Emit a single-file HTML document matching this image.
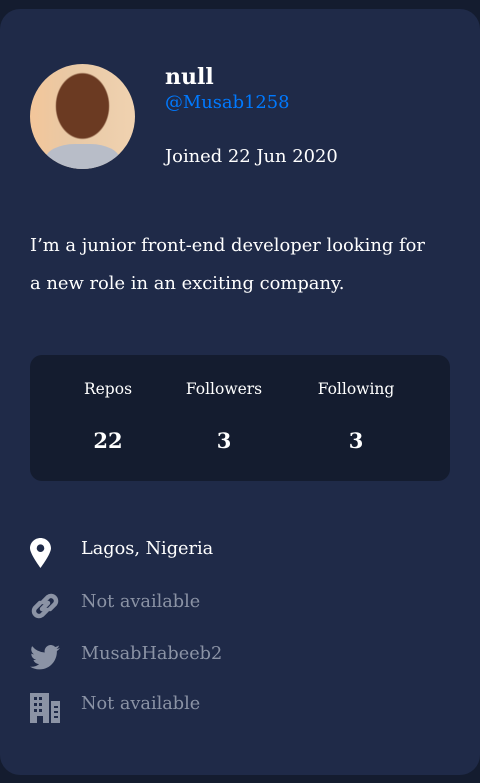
<!DOCTYPE html>
<html><head><style>
*{margin:0;padding:0;box-sizing:border-box}
body{width:480px;height:783px;background:#141c2f;font-family:"DejaVu Serif","Liberation Serif",serif;color:#fff;position:relative;overflow:hidden}
.card{position:absolute;left:0;top:9px;width:480px;height:766px;background:#1f2a48;border-radius:20px}
.a{position:absolute;white-space:nowrap}
.av{left:30px;top:64px;width:105px;height:105px;border-radius:50%;background:radial-gradient(ellipse 26% 32% at 50% 40%,#6b3a22 0 95%,transparent 100%),linear-gradient(90deg,#f3c69a,#e8c9a6 40%,#f0d2b0);overflow:hidden}
.shirt{position:absolute;left:15px;top:80px;width:75px;height:40px;background:#b8bdc8;border-radius:40% 40% 0 0}
.stats{left:30px;top:355px;width:420px;height:126px;background:#141c2f;border-radius:12px}
.lab{font-size:15.5px;top:380px;transform:translateX(-50%)}
.val{font-size:21px;font-weight:bold;top:428px;transform:translateX(-50%)}
.it{left:81px;font-size:17.7px}
.g{color:#8b93a5}
</style></head><body>
<div class="card"></div>
<div class="a av"><div class="shirt"></div></div>
<div class="a" style="left:165px;top:64px;font-size:22px;font-weight:bold">null</div>
<div class="a" style="left:165px;top:92px;font-size:17.9px;color:#0079ff">@Musab1258</div>
<div class="a" style="left:165px;top:146px;font-size:17.9px">Joined 22 Jun 2020</div>
<div class="a" style="left:30px;top:227px;font-size:17.9px;line-height:38px;width:400px;white-space:normal">I’m a junior front-end developer looking for a new role in an exciting company.</div>
<div class="a stats"></div>
<div class="a lab" style="left:108px">Repos</div>
<div class="a lab" style="left:224px">Followers</div>
<div class="a lab" style="left:356px">Following</div>
<div class="a val" style="left:108px">22</div>
<div class="a val" style="left:224px">3</div>
<div class="a val" style="left:356px">3</div>
<svg class="a" style="left:30px;top:538px" width="21" height="30" viewBox="0 0 21 30"><path d="M10.5 0C4.7 0 0 4.6 0 10.3 0 16 10.5 30 10.5 30S21 16 21 10.3C21 4.6 16.3 0 10.5 0zm0 14a3.8 3.8 0 110-7.6 3.8 3.8 0 010 7.6z" fill="#fff"/></svg>
<div class="a it" style="top:539px">Lagos, Nigeria</div>
<svg class="a" style="left:30px;top:591px" width="30" height="30" viewBox="0 0 30 30"><g fill="none" stroke="#8b93a5" stroke-width="4.5" stroke-linecap="round"><path d="M13 11l5-5a5 5 0 017 7l-5 5"/><path d="M17 19l-5 5a5 5 0 01-7-7l5-5"/><path d="M12 18l6-6"/></g></svg>
<div class="a it g" style="top:592px">Not available</div>
<svg class="a" style="left:30px;top:645px" width="30" height="25" viewBox="0 0 24 20"><path fill="#8b93a5" d="M24 2.4a9.8 9.8 0 01-2.8.8A5 5 0 0023.3.4a9.9 9.9 0 01-3.1 1.2A4.9 4.9 0 0011.8 6 14 14 0 011.7.9a4.9 4.9 0 001.5 6.6 4.9 4.9 0 01-2.2-.6 4.9 4.9 0 003.9 4.9 4.9 4.9 0 01-2.2.1 4.9 4.9 0 004.6 3.4A9.9 9.9 0 010 17.3 14 14 0 007.5 19.5c9.1 0 14-7.5 14-14v-.6A10 10 0 0024 2.4z"/></svg>
<div class="a it g" style="top:644px">MusabHabeeb2</div>
<svg class="a" style="left:30px;top:693px" width="30" height="30" viewBox="0 0 30 30"><path fill="#8b93a5" d="M0 0h19v30h-6v-7H7v7H0z"/><path fill="#8b93a5" d="M21 8h9v22h-9z"/><g fill="#1f2a48"><rect x="4" y="4" width="3" height="3"/><rect x="9" y="4" width="3" height="3"/><rect x="4" y="10" width="3" height="3"/><rect x="9" y="10" width="3" height="3"/><rect x="4" y="16" width="3" height="3"/><rect x="9" y="16" width="3" height="3"/><rect x="24" y="13" width="4" height="2"/><rect x="24" y="18" width="4" height="2"/><rect x="24" y="23" width="4" height="2"/></g></svg>
<div class="a it g" style="top:694px">Not available</div>
</body></html>
